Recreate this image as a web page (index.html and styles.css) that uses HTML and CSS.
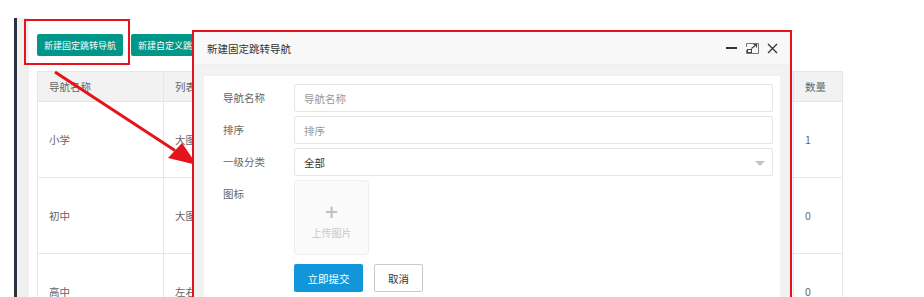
FILE: index.html
```html
<!DOCTYPE html>
<html lang="zh-CN">
<head>
  <meta charset="UTF-8">
  <title>导航管理</title>
  <link rel="stylesheet" href="styles.css">
</head>
<body>
  <div class="page">
    <div class="rail"></div>
    <div class="gutter"></div>
    <main class="panel">
      <div class="toolbar">
        <button class="btn btn-green">新建固定跳转导航</button>
        <button class="btn btn-green">新建自定义跳转导航</button>
      </div>
      <table class="nav-table">
        <colgroup>
          <col style="width:126px">
          <col style="width:130px">
          <col style="width:150px">
          <col style="width:150px">
          <col style="width:200px">
          <col style="width:49px">
        </colgroup>
        <thead>
          <tr><th>导航名称</th><th>列表样式</th><th>跳转类型</th><th>链接</th><th>图标</th><th>数量</th></tr>
        </thead>
        <tbody>
          <tr><td>小学</td><td>大图</td><td>固定</td><td></td><td></td><td>1</td></tr>
          <tr><td>初中</td><td>大图</td><td>固定</td><td></td><td></td><td>0</td></tr>
          <tr><td>高中</td><td>左右图文</td><td>固定</td><td></td><td></td><td>0</td></tr>
        </tbody>
      </table>
    </main>
  </div>

  <!-- annotations -->
  <div class="mark mark-btn"></div>
  <svg class="arrow" width="924" height="297" viewBox="0 0 924 297">
    <line x1="55" y1="72" x2="175" y2="150.5" stroke="#e5141b" stroke-width="3"/>
    <polygon points="168,158 182,143 197,165" fill="#e5141b"/>
  </svg>

  <div class="layer">
    <div class="layer-title">
      <span>新建固定跳转导航</span>
      <div class="layer-tools">
        <svg width="12" height="10" viewBox="0 0 12 10"><rect x="0" y="4" width="11" height="2" fill="#333"/></svg>
        <svg width="13" height="11" viewBox="0 0 13 11">
          <path d="M0.5 4 V0.5 H12.5 V10.5 H0.5 V7" fill="none" stroke="#777"/>
          <rect x="1.5" y="6.5" width="4" height="3" fill="none" stroke="#444"/>
          <path d="M5.5 5.5 L10.5 1.5 M7.5 1.5 H10.5 V4.5" fill="none" stroke="#444" stroke-width="1.1"/>
        </svg>
        <svg width="11" height="11" viewBox="0 0 11 11"><path d="M1 1 L10 10 M10 1 L1 10" stroke="#333" stroke-width="1.3"/></svg>
      </div>
    </div>
    <div class="layer-body">
      <form class="card">
        <div class="form-row">
          <label class="form-label">导航名称</label>
          <input class="form-input" type="text" placeholder="导航名称">
        </div>
        <div class="form-row">
          <label class="form-label">排序</label>
          <input class="form-input" type="text" placeholder="排序">
        </div>
        <div class="form-row">
          <label class="form-label">一级分类</label>
          <div class="form-input form-select">全部<span class="caret"></span></div>
        </div>
        <div class="form-row form-row-top">
          <label class="form-label">图标</label>
          <div class="upload">
            <span class="upload-plus">+</span>
            <span class="upload-text">上传图片</span>
          </div>
        </div>
        <div class="form-row form-actions">
          <button type="button" class="btn btn-blue">立即提交</button>
          <button type="button" class="btn btn-plain">取消</button>
        </div>
      </form>
    </div>
  </div>
</body>
</html>
```

FILE: styles.css
```css
:root {
  --red: #e5141b;
  --green: #009688;
  --blue: #1296db;
  --line: #e6e6e6;
  --text: #666;
}
html, body {
  margin: 0;
  padding: 0;
  background: #fff;
  font-family: "Noto Sans CJK SC", "Noto Sans", sans-serif;
  font-size: 10.5px;
  color: var(--text);
  width: 924px;
  height: 297px;
  overflow: hidden;
}
body {
  position: relative;
}

.page {
  display: flex;
  padding: 18px 0 0 14px;
  height: 279px;
}
.rail {
  width: 3px;
  background: #2a3441;
}
.gutter {
  width: 12px;
  background: #f0f0f0;
}
.panel {
  flex: 1;
  background: #fff;
  padding: 16px 8px 0 8px;
}

.toolbar {
  display: flex;
  gap: 8px;
  margin-bottom: 15px;
}
.btn {
  font-family: inherit;
  border: none;
  border-radius: 2px;
  cursor: pointer;
  white-space: nowrap;
}
.btn-green {
  background: var(--green);
  color: #fff;
  height: 22px;
  padding: 0 7px;
  font-size: 9px;
}

.nav-table {
  width: 805px;
  table-layout: fixed;
  border-collapse: collapse;
}
.nav-table th,
.nav-table td {
  border: 1px solid var(--line);
  padding: 0 11px;
  text-align: left;
  font-weight: normal;
  color: var(--text);
  white-space: nowrap;
  overflow: hidden;
}
.nav-table th {
  background: #f2f2f2;
  height: 29px;
}
.nav-table td {
  height: 75px;
}

/* annotations */
.mark {
  position: absolute;
  border: 2px solid var(--red);
  box-sizing: border-box;
}
.mark-btn {
  left: 24px;
  top: 19px;
  width: 106px;
  height: 46px;
}
.arrow {
  position: absolute;
  left: 0;
  top: 0;
  z-index: 1;
  pointer-events: none;
}

/* dialog */
.layer {
  position: absolute;
  left: 192px;
  top: 30px;
  width: 600px;
  height: 290px;
  box-sizing: border-box;
  border: 2px solid var(--red);
  background: #f2f2f2;
  z-index: 2;
}
.layer-title {
  height: 32px;
  background: #f8f8f8;
  border-bottom: 1px solid #eee;
  display: flex;
  align-items: center;
  justify-content: space-between;
  padding: 0 12px 0 13px;
  color: #333;
}
.layer-tools {
  display: flex;
  align-items: center;
  gap: 8px;
}
.layer-body {
  padding: 11px 10px 0 10px;
}
.card {
  background: #fff;
  margin: 0;
  padding: 8px 7px 10px 0;
  display: flex;
  flex-direction: column;
  gap: 4px;
}
.form-row {
  display: flex;
  align-items: center;
}
.form-row-top {
  align-items: flex-start;
}
.form-label {
  width: 90px;
  padding-left: 19px;
  box-sizing: border-box;
  line-height: 28px;
  color: #666;
  flex-shrink: 0;
}
.form-input {
  flex: 1;
  height: 28px;
  box-sizing: border-box;
  border: 1px solid var(--line);
  border-radius: 2px;
  padding: 0 9px;
  font-family: inherit;
  font-size: 10.5px;
  color: #333;
  outline: none;
}
.form-input::placeholder {
  color: #999;
}
.form-select {
  position: relative;
  display: flex;
  align-items: center;
}
.caret {
  position: absolute;
  right: 7px;
  top: 12px;
  border: 5px solid transparent;
  border-top: 5px solid #c2c2c2;
  border-bottom: none;
}
.upload {
  width: 75px;
  height: 75px;
  box-sizing: border-box;
  background: #fafafa;
  border: 1px solid #eee;
  border-radius: 4px;
  display: flex;
  flex-direction: column;
  align-items: center;
  justify-content: center;
  padding-top: 8px;
}
.upload-plus {
  font-family: "DejaVu Sans", sans-serif;
  font-size: 18px;
  font-weight: bold;
  line-height: 18px;
  color: #c2c2c2;
}
.upload-text {
  color: #c9c9c9;
  font-size: 10px;
  margin-top: 4px;
}
.form-actions {
  padding-left: 90px;
  margin-top: 5px;
  gap: 11px;
}
.btn-blue {
  background: var(--blue);
  color: #fff;
  height: 28px;
  width: 69px;
  font-size: 10.5px;
}
.btn-plain {
  background: #fff;
  color: #333;
  border: 1px solid #c9c9c9;
  height: 28px;
  width: 49px;
  font-size: 10.5px;
}
```
